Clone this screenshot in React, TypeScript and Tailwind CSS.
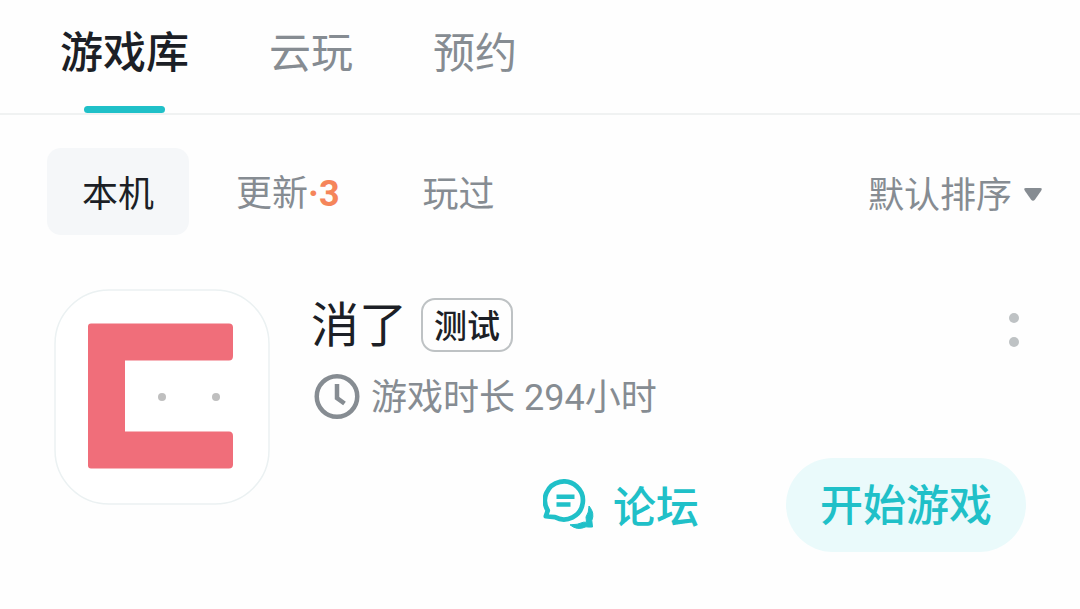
const tabs = [
  { label: '游戏库', active: true },
  { label: '云玩', active: false },
  { label: '预约', active: false },
];

function GameIcon() {
  return (
    <svg className="block h-[216px] w-[216px] shrink-0" viewBox="0 0 216 216" fill="none">
      <rect x="1" y="1" width="214" height="214" rx="54" fill="#fff" stroke="#ebf1f2" strokeWidth="1.5" />
      <path
        d="M37 34.500H175Q179 34.500 179 38.500V67Q179 71.500 175 71.500H71V142.500H175Q179 142.500 179 147V175.500Q179 179.500 175 179.500H37Q34 179.500 34 176.500V37.500Q34 34.500 37 34.500Z"
        fill="#f06e7a"
      />
      <circle cx="108" cy="108" r="4" fill="#bfbfbf" />
      <circle cx="162" cy="108" r="4" fill="#bfbfbf" />
    </svg>
  );
}

function ClockIcon() {
  return (
    <svg className="block h-[46px] w-[46px] shrink-0" viewBox="0 0 46 46" fill="none" stroke="#868c92">
      <circle cx="23" cy="23.500" r="20.250" strokeWidth="4.500" />
      <path d="M23 11V25L30.500 30.500" strokeWidth="4.500" />
    </svg>
  );
}

function ForumIcon() {
  return (
    <svg className="block h-[52px] w-[52px] shrink-0" viewBox="0 0 52 52" fill="none" stroke="#20c0c8">
      <path
        d="M2.800 37.300L4.800 31.500A19 19 0 1 1 12 38.200Q7 38 2.800 37.300Z"
        strokeWidth="4.700"
        strokeLinejoin="round"
      />
      <path d="M13.500 17.800H31.500M13.500 25.500H27.500" strokeWidth="4.400" />
      <path
        d="M46 27Q52 34 48.800 41.500L49.500 48Q46 48.300 43 47.800Q34 52 27 45.800Q34.500 46 40.500 43.200L43.500 43.200L43 38Q46 33.500 46 27Z"
        fill="#20c0c8"
        strokeWidth="1"
        strokeLinejoin="round"
      />
    </svg>
  );
}

export default function App() {
  return (
    <div className="h-[609px] w-[1080px] overflow-hidden bg-[#fefefe] font-['Noto_Sans_CJK_SC',sans-serif] text-[#868c92]">
      <header className="flex h-[115px] items-start gap-[80px] border-b-2 border-[#f0f2f2] pl-[60px]">
        {tabs.map((tab) => (
          <div
            key={tab.label}
            className={
              tab.active
                ? 'flex h-[113px] flex-col items-center justify-between text-[#1c1f26]'
                : 'flex h-[113px] flex-col items-center justify-between'
            }
          >
            <span
              className={
                tab.active
                  ? 'pt-[19px] text-[43px] leading-[60px] font-medium'
                  : 'pt-[20px] text-[42px] leading-[60px]'
              }
            >
              {tab.label}
            </span>
            {tab.active && <span className="h-[7px] w-[81px] rounded-full bg-[#20c0c8]" />}
          </div>
        ))}
      </header>

      <nav className="mt-[33px] flex h-[87px] items-center pr-[38px] pl-[47px] text-[36px] leading-[50px]">
        <span className="flex h-[87px] w-[142px] items-center justify-center rounded-[14px] bg-[#f5f7f9] pb-[2px] text-[#1c1f26]">
          本机
        </span>
        <span className="ml-[47px]">
          更新<b className="font-[Roboto] font-bold text-[#f5855a]">·3</b>
        </span>
        <span className="ml-[83px] pb-[2px]">玩过</span>
        <span className="ml-auto">默认排序</span>
        <svg className="mt-[5px] ml-[12px] h-[13px] w-[18px]" viewBox="0 0 18 13" fill="#868c92">
          <path d="M2 0H16Q19 0 17 3L11 11.500Q9 14 7 11.500L1 3Q-1 0 2 0Z" />
        </svg>
      </nav>

      <main className="mt-[54px] flex pr-[54px] pl-[54px]">
        <GameIcon />
        <section className="flex min-w-0 flex-1 flex-col pl-[41px]">
          <div className="flex h-[72px] items-center">
            <h1 className="pb-[8px] text-[48px] leading-[60px] text-[#1c1f26]">消了</h1>
            <span className="ml-[14px] flex h-[54px] w-[92px] items-center justify-center rounded-[14px] border-2 border-[#bec2c4] pb-[2px] text-[33px] leading-[48px] font-medium text-[#1c1f26]">
              测试
            </span>
            <div className="mr-[7px] ml-auto flex flex-col gap-[14px] pt-[9px]">
              <i className="size-[10px] rounded-full bg-[#bec2c4]" />
              <i className="size-[10px] rounded-full bg-[#bec2c4]" />
            </div>
          </div>
          <div className="mt-[12px] flex h-[46px] items-center pl-[3px] text-[36px] leading-[46px]">
            <ClockIcon />
            <span className="ml-[11px] whitespace-pre">
              游戏时长<span className="font-[Roboto]"> 294</span>小时
            </span>
          </div>
          <div className="mt-[39px] flex items-center justify-end text-[43px] leading-[60px] font-medium text-[#20c0c8]">
            <ForumIcon />
            <span className="ml-[18px] pb-[2px]">论坛</span>
            <button className="ml-[87px] h-[94px] w-[240px] rounded-full bg-[#eafafb] pb-[6px]">开始游戏</button>
          </div>
        </section>
      </main>
    </div>
  );
}
